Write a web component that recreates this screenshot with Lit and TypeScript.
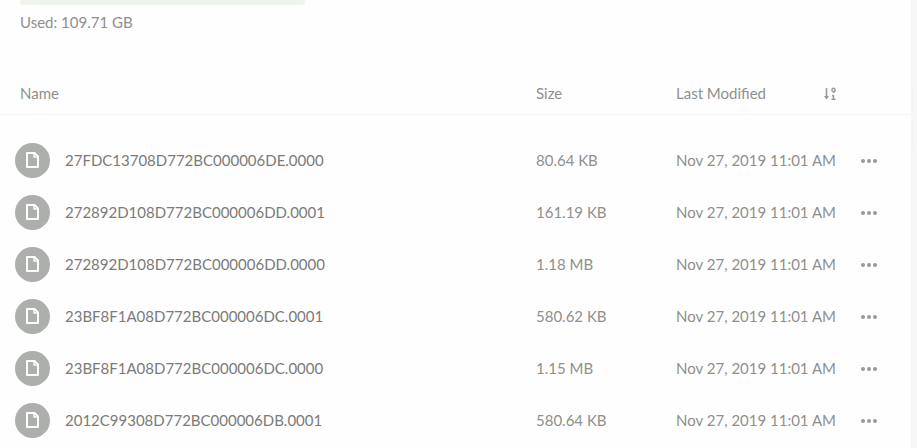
import { LitElement, html, css } from "lit";
import { customElement } from "lit/decorators.js";

const files = [
  ["27FDC13708D772BC000006DE.0000", "80.64 KB"],
  ["272892D108D772BC000006DD.0001", "161.19 KB"],
  ["272892D108D772BC000006DD.0000", "1.18 MB"],
  ["23BF8F1A08D772BC000006DC.0001", "580.62 KB"],
  ["23BF8F1A08D772BC000006DC.0000", "1.15 MB"],
  ["2012C99308D772BC000006DB.0001", "580.64 KB"],
];

@customElement("app-root")
export class AppRoot extends LitElement {
  static styles = css`
    :host { display: flex; height: 448px; overflow: hidden; background: #fefefe; font: 15px/20px Lato, sans-serif; color: #8f908d; }
    .main { flex: 1; min-width: 0; }
    .edge { width: 6px; background: #f7f7f7; }
    .tick { width: 1px; margin-left: 1px; background: #edf5ec; }
    .tick.first { height: 27px; margin-top: 85px; }
    .tick.second { height: 32px; margin-top: 5px; }
    .usage { height: 73px; padding-left: 20px; box-sizing: border-box; }
    .bar { width: 285px; height: 5px; background: #eef3ec; margin-bottom: 7px; border-radius: 3px; }
    .row { display: grid; grid-template-columns: 50px 471px 140px 148px 37px 1fr; align-items: center; height: 52px; padding-left: 15px; }
    .head { display: grid; grid-template-columns: 516px 140px 147px 1fr; align-items: center; height: 40px; padding: 0 0 1px 20px; box-sizing: content-box; border-bottom: 1px solid #f5f5f5; margin-bottom: 19px; }
    .head span { margin-top: -1px; }
    .disc { width: 35px; height: 35px; border-radius: 50%; background: #acafab; display: grid; place-items: center; }
    .name { color: #7b7b79; }
    .row span { white-space: nowrap; }
    svg { display: block; }
    .dots { margin-top: 1px; }
    .sort { margin-top: 1px; }
  `;
  render() {
    return html`
      <div class="main">
        <div class="usage"><div class="bar"></div>Used: 109.71 GB</div>
        <div class="head"><span>Name</span><span>Size</span><span>Last Modified</span>
          <svg class="sort" width="14" height="14" viewBox="0 0 14 14" fill="none" stroke="#999"><path d="M3.500 1v10" stroke-width="1.600"/><path d="M1 9h5l-2.500 3.500z" fill="#999" stroke="none"/><circle cx="10.500" cy="2.900" r="1.600" stroke-width="1.400"/><path d="M12 3.500l-1.500 2.500M9 8.700h1.500V12M8.500 12.300h4" stroke-width="1.400"/></svg>
        </div>
        ${files.map(([n, s]) => html`<div class="row">
          <div class="disc"><svg width="13" height="16" viewBox="0 0 13 16" fill="none" stroke="#fff" stroke-width="2" stroke-linejoin="round"><path d="M1 1h7.500l3.500 3.500V15H1z"/><path d="M8 1.500V5h3.500" stroke-width="1.400"/></svg></div>
          <span class="name">${n}</span><span>${s}</span><span>Nov 27, 2019 11:01 AM</span><i></i>
          <svg class="dots" width="18" height="4" fill="#999"><circle cx="2" cy="2" r="2"/><circle cx="8" cy="2" r="2"/><circle cx="14" cy="2" r="2"/></svg>
        </div>`)}
      </div>
      <div class="edge"><div class="tick first"></div><div class="tick second"></div></div>`;
  }
}
